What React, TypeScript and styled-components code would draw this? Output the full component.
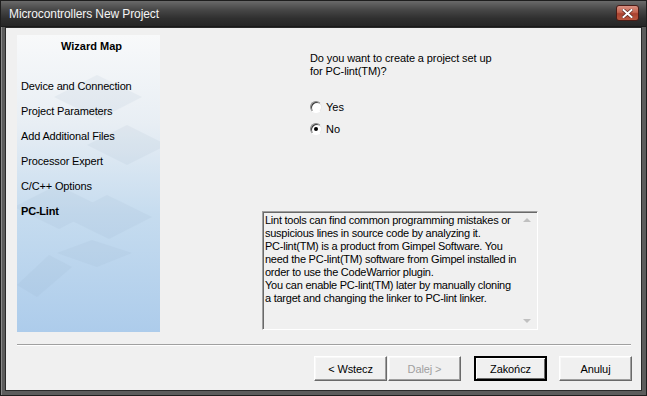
import React, { useState } from "react";
import styled, { createGlobalStyle } from "styled-components";

const GlobalStyle = createGlobalStyle`
  html, body {
    margin: 0;
    padding: 0;
    background: #2b2b2b;
  }
  body {
    font-family: "Liberation Sans", Arial, sans-serif;
    font-size: 11px;
    color: #000;
  }
`;

const Window = styled.div`
  width: 647px;
  height: 396px;
  box-sizing: border-box;
  display: flex;
  flex-direction: column;
  background: #5c5c5c;
  border: 1px solid #1e1e1e;
  padding: 0 4px 4px 4px;
  box-shadow: inset 1px 1px 0 #8a8a8a;
`;

const TitleBar = styled.div`
  height: 26px;
  display: flex;
  align-items: center;
  justify-content: space-between;
  margin: 0 -4px;
  padding: 0 7px 2px 8px;
  background: linear-gradient(#6a6a6a 0%, #474747 35%, #2f2f2f 70%, #262626 100%);
  border-bottom: 1px solid #1a1a1a;
`;

const Title = styled.span`
  color: #f4f4f4;
  font-family: "Liberation Sans", Arial, sans-serif;
  font-size: 12px;
  letter-spacing: -0.1px;
  margin-top: 2px;
`;

const CloseButton = styled.div`
  width: 21px;
  height: 14px;
  margin-top: 1px;
  border-radius: 3px;
  border: 1px solid #4a1c16;
  background: linear-gradient(#d99082 0%, #c4644f 45%, #a9412f 55%, #b9583f 100%);
  display: flex;
  align-items: center;
  justify-content: center;
`;

const Body = styled.div`
  flex: 1;
  display: flex;
  flex-direction: column;
  background: #f0f0f0;
  border: 1px solid #2a2a2a;
  padding: 7px 9px 9px 11px;
`;

const Main = styled.div`
  display: flex;
  height: 297px;
`;

const MapPanel = styled.div`
  position: relative;
  width: 143px;
  flex-shrink: 0;
  overflow: hidden;
  background: linear-gradient(#f8f9fa 0%, #e8eef4 30%, #c6dcef 60%, #adcceb 100%);
`;

const Decor = styled.svg`
  position: absolute;
  inset: 0;
  pointer-events: none;
`;

const MapContent = styled.div`
  position: relative;
  display: flex;
  flex-direction: column;
`;

const MapTitle = styled.div`
  font-weight: bold;
  font-size: 11px;
  text-align: center;
  height: 24px;
  line-height: 22px;
  padding-left: 6px;
  margin-bottom: 15px;
`;

const MapItem = styled.div<{ $active?: boolean }>`
  height: 25px;
  line-height: 25px;
  padding-left: 4px;
  font-size: 11px;
  font-weight: ${p => (p.$active ? "bold" : "normal")};
  letter-spacing: ${p => (p.$active ? "-0.2px" : "-0.15px")};
  color: #000;
`;

const Page = styled.div`
  flex: 1;
  display: flex;
  flex-direction: column;
`;

const Question = styled.div`
  margin: 17px 0 0 150px;
  line-height: 13px;
  letter-spacing: -0.1px;
`;

const RadioGroup = styled.div`
  margin: 22px 0 0 150px;
  display: flex;
  flex-direction: column;
  gap: 9px;
`;

const RadioRow = styled.label`
  display: flex;
  align-items: center;
  height: 13px;
  gap: 4px;
  cursor: default;
`;

const RadioDot = styled.span<{ $checked: boolean }>`
  width: 12px;
  height: 12px;
  box-sizing: border-box;
  border-radius: 50%;
  border: 1px solid;
  border-color: #8a8a8a #e8e8e8 #ffffff #8a8a8a;
  background: #fff;
  box-shadow: inset 1px 1px 0 #3c3c3c;
  display: flex;
  align-items: center;
  justify-content: center;
  &::after {
    content: "";
    width: 4px;
    height: 4px;
    border-radius: 50%;
    background: ${p => (p.$checked ? "#000" : "transparent")};
  }
`;

const InfoBox = styled.div`
  margin: auto 0 2px 102px;
  width: 276px;
  height: 119px;
  box-sizing: border-box;
  position: relative;
  border: 1px solid;
  border-color: #a0a0a0 #ffffff #ffffff #a0a0a0;
  box-shadow: inset 1px 1px 0 #696969;
  padding: 2px 0 0 2px;
  line-height: 13px;
  letter-spacing: -0.25px;
  white-space: nowrap;
  color: #000;
`;

const ScrollArrow = styled.span<{ $down?: boolean }>`
  position: absolute;
  right: 6px;
  ${p => (p.$down ? "bottom: 6px;" : "top: 6px;")}
  width: 0;
  height: 0;
  border-left: 4px solid transparent;
  border-right: 4px solid transparent;
  ${p =>
    p.$down
      ? "border-top: 4px solid #c0c0c0;"
      : "border-bottom: 4px solid #c0c0c0;"}
`;

const Separator = styled.div`
  margin-top: 12px;
  margin-right: 1px;
  height: 0;
  border-top: 1px solid #a0a0a0;
  border-bottom: 1px solid #ffffff;
`;

const ButtonRow = styled.div`
  margin-top: 10px;
  display: flex;
  justify-content: flex-end;
`;

const Button = styled.button<{ $default?: boolean; $gap?: number }>`
  width: 73px;
  height: 25px;
  margin-left: ${p => p.$gap ?? 0}px;
  box-sizing: border-box;
  font-family: "Liberation Sans", Arial, sans-serif;
  font-size: 11px;
  letter-spacing: -0.1px;
  color: #000;
  background: #f0f0f0;
  padding: 0;
  border: 1px solid;
  border-color: #ffffff #6a6a6a #6a6a6a #ffffff;
  box-shadow: inset -1px -1px 0 #a0a0a0, inset 1px 1px 0 #f8f8f8;
  ${p =>
    p.$default
      ? "border: 2px solid; border-color: #000; box-shadow: inset 1px 1px 0 #fff, inset -1px -1px 0 #6a6a6a;"
      : ""}
  &:disabled {
    color: #a0a0a0;
  }
`;

const items = [
  "Device and Connection",
  "Project Parameters",
  "Add Additional Files",
  "Processor Expert",
  "C/C++ Options",
];

export default function App() {
  const [choice, setChoice] = useState<"yes" | "no">("no");

  return (
    <>
      <GlobalStyle />
      <Window>
        <TitleBar>
          <Title>Microcontrollers New Project</Title>
          <CloseButton>
            <svg width="11" height="9" viewBox="0 0 11 9">
              <path d="M1.5 1 L9.5 8 M9.5 1 L1.5 8" stroke="#5a2a22" strokeWidth="3.4" strokeLinecap="square" />
              <path d="M1.5 1 L9.5 8 M9.5 1 L1.5 8" stroke="#ffffff" strokeWidth="2" strokeLinecap="square" />
            </svg>
          </CloseButton>
        </TitleBar>
        <Body>
          <Main>
            <MapPanel>
              <Decor width="143" height="297" viewBox="0 0 143 297">
                <g fill="#8aa2bb" opacity="0.09">
                  <polygon points="80,40 125,62 82,84 37,62" />
                  <polygon points="110,90 150,110 110,130 70,110" />
                  <polygon points="40,150 85,172 42,194 -3,172" />
                  <polygon points="90,160 135,182 92,204 47,182" />
                  <polygon points="75,205 115,218 80,232 40,218" />
                  <polygon points="32,220 55,232 20,262 0,250" />
                </g>
              </Decor>
              <MapContent>
                <MapTitle>Wizard Map</MapTitle>
                {items.map(i => (
                  <MapItem key={i}>{i}</MapItem>
                ))}
                <MapItem $active>PC-Lint</MapItem>
              </MapContent>
            </MapPanel>
            <Page>
              <Question>
                Do you want to create a project set up
                <br />
                for PC-lint(TM)?
              </Question>
              <RadioGroup>
                <RadioRow onClick={() => setChoice("yes")}>
                  <RadioDot $checked={choice === "yes"} />
                  Yes
                </RadioRow>
                <RadioRow onClick={() => setChoice("no")}>
                  <RadioDot $checked={choice === "no"} />
                  No
                </RadioRow>
              </RadioGroup>
              <InfoBox>
                Lint tools can find common programming mistakes or
                <br />
                suspicious lines in source code by analyzing it.
                <br />
                PC-lint(TM) is a product from Gimpel Software. You
                <br />
                need the PC-lint(TM) software from Gimpel installed in
                <br />
                order to use the CodeWarrior plugin.
                <br />
                You can enable PC-lint(TM) later by manually cloning
                <br />
                a target and changing the linker to PC-lint linker.
                <ScrollArrow />
                <ScrollArrow $down />
              </InfoBox>
            </Page>
          </Main>
          <Separator />
          <ButtonRow>
            <Button>&lt; Wstecz</Button>
            <Button disabled $gap={1}>Dalej &gt;</Button>
            <Button $default $gap={13}>Zakończ</Button>
            <Button $gap={12}>Anuluj</Button>
          </ButtonRow>
        </Body>
      </Window>
    </>
  );
}
